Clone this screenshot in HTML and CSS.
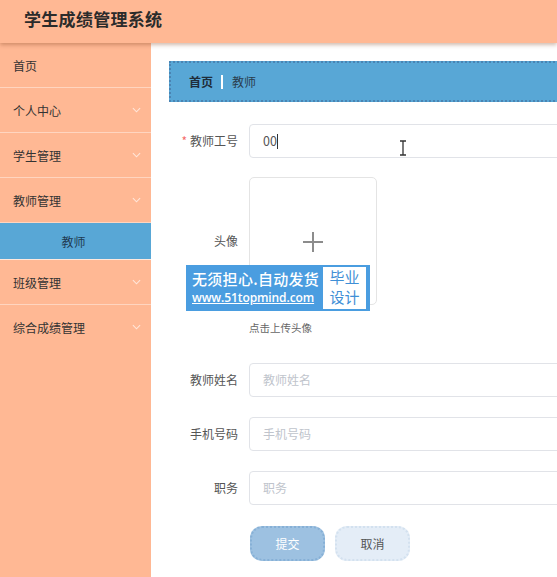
FILE: index.html
```html
<!DOCTYPE html>
<html lang="zh">
<head>
<meta charset="utf-8">
<title>学生成绩管理系统</title>
<link rel="stylesheet" href="styles.css">
</head>
<body>
<header class="topbar">
  <h1 class="title">学生成绩管理系统</h1>
</header>
<div class="layout">
  <aside class="sidebar">
    <div class="menu-item">首页</div>
    <div class="menu-item">个人中心<svg class="chev" viewBox="0 0 10 6"><path d="M1 1l4 4 4-4" /></svg></div>
    <div class="menu-item">学生管理<svg class="chev" viewBox="0 0 10 6"><path d="M1 1l4 4 4-4" /></svg></div>
    <div class="menu-item">教师管理<svg class="chev" viewBox="0 0 10 6"><path d="M1 1l4 4 4-4" /></svg></div>
    <div class="sub-item">教师</div>
    <div class="menu-item">班级管理<svg class="chev" viewBox="0 0 10 6"><path d="M1 1l4 4 4-4" /></svg></div>
    <div class="menu-item last">综合成绩管理<svg class="chev" viewBox="0 0 10 6"><path d="M1 1l4 4 4-4" /></svg></div>
  </aside>
  <main class="main">
    <div class="content">
      <div class="breadcrumb">
        <span class="crumb-strong">首页</span>
        <span class="crumb-sep"></span>
        <span class="crumb">教师</span>
      </div>
      <div class="form">
        <div class="row">
          <label class="label"><span class="req">*</span>教师工号</label>
          <div class="input filled">00<span class="caret"></span></div>
        </div>
        <div class="row row-avatar">
          <label class="label label-mid">头像</label>
          <div class="upload-col">
            <div class="upload">
              <span class="plus-h"></span>
              <span class="plus-v"></span>
            </div>
            <div class="hint">点击上传头像</div>
          </div>
        </div>
        <div class="row">
          <label class="label">教师姓名</label>
          <div class="input placeholder">教师姓名</div>
        </div>
        <div class="row">
          <label class="label">手机号码</label>
          <div class="input placeholder">手机号码</div>
        </div>
        <div class="row">
          <label class="label">职务</label>
          <div class="input placeholder">职务</div>
        </div>
        <div class="buttons">
          <button class="btn btn-primary">提交</button>
          <button class="btn btn-cancel">取消</button>
        </div>
      </div>
    </div>
  </main>
</div>
<div class="watermark">
  <div class="wm-left">
    <div class="wm-line1">无须担心.自动发货</div>
    <div class="wm-line2">www.51topmind.com</div>
  </div>
  <div class="wm-right">毕业<br>设计</div>
</div>
<svg class="ibeam" viewBox="0 0 8 16"><path d="M1 1h6M4 1v14M1 15h6" /></svg>
</body>
</html>
```
FILE: styles.css
```css
html, body {
  margin: 0;
  padding: 0;
  height: 100%;
  overflow: hidden;
  font-family: "Noto Sans CJK SC", "Noto Sans", sans-serif;
  background: #ffffff;
}

.topbar {
  height: 43px;
  background: #ffb894;
  box-shadow: 0 2px 4px rgba(120, 60, 30, 0.35);
  position: relative;
  z-index: 2;
  display: flex;
  align-items: center;
}

.title {
  margin: 0 0 0 24px;
  font-size: 17px;
  font-weight: 700;
  color: #2b2b2b;
  letter-spacing: 0.3px;
  line-height: 1;
  margin-top: -6px;
}

.layout {
  display: flex;
  height: calc(100% - 43px);
}

.sidebar {
  width: 151px;
  flex: 0 0 151px;
  background: #ffb894;
  height: 100%;
}

.menu-item {
  height: 44px;
  border-bottom: 1px solid #ffd5c0;
  display: flex;
  align-items: center;
  justify-content: space-between;
  padding: 0 10px 0 13px;
  font-size: 12px;
  color: #333333;
}

.menu-item.last {
  border-bottom-color: transparent;
}

.chev {
  width: 9px;
  height: 6px;
  fill: none;
  stroke: rgba(255, 255, 255, 0.65);
  stroke-width: 1.2;
}

.sub-item {
  height: 36px;
  background: #58a7d6;
  border-bottom: 1px solid #ffe9de;
  display: flex;
  align-items: center;
  justify-content: center;
  font-size: 12px;
  color: #1f3a52;
  padding-right: 4px;
}

.main {
  flex: 1;
  overflow: hidden;
  padding: 18px 0 0 18px;
}

.content {
  width: 430px;
}

.breadcrumb {
  height: 37px;
  background: #58a7d6;
  border: 2px dotted #4a84b3;
  display: flex;
  align-items: center;
  padding-left: 18px;
  font-size: 12px;
}

.crumb-strong {
  color: #1f2d3a;
  font-weight: 600;
}

.crumb-sep {
  display: inline-block;
  width: 2px;
  height: 14px;
  background: #ffffff;
  margin: 0 9px 0 8px;
}

.crumb {
  color: #2a3c4c;
}

.form {
  margin-top: 22px;
}

.row {
  display: flex;
  align-items: flex-start;
  margin-bottom: 20px;
}

.row:first-child {
  margin-bottom: 19px;
}

.label {
  width: 69px;
  flex: 0 0 69px;
  padding-right: 11px;
  text-align: right;
  font-size: 12px;
  line-height: 34px;
  color: #555555;
}

.req {
  color: #f56c6c;
  margin-right: 3px;
}

.input {
  flex: 1;
  height: 32px;
  border: 1px solid #e1e3e8;
  border-radius: 4px;
  padding-left: 13px;
  font-size: 12px;
  line-height: 32px;
  display: flex;
  align-items: center;
}

.filled {
  color: #555555;
  font-size: 12.5px;
}

.caret {
  display: inline-block;
  width: 1px;
  height: 15px;
  background: #333333;
}

.placeholder {
  color: #c0c4cc;
}

.row-avatar {
  align-items: stretch;
  margin-bottom: 27px;
}

.label-mid {
  height: 128px;
  line-height: 128px;
}

.upload-col {
  display: flex;
  flex-direction: column;
}

.upload {
  width: 126px;
  height: 126px;
  border: 1px solid #e4e4e4;
  border-radius: 5px;
  position: relative;
}

.plus-h, .plus-v {
  position: absolute;
  background: #8c8c8c;
}

.plus-h {
  width: 20px;
  height: 1.5px;
  left: 53px;
  top: 63px;
}

.plus-v {
  width: 1.5px;
  height: 20px;
  left: 62px;
  top: 54px;
}

.hint {
  margin-top: 15px;
  font-size: 10.5px;
  line-height: 16px;
  color: #666666;
}

.buttons {
  display: flex;
  gap: 10px;
  margin-left: 81px;
  margin-top: 21px;
}

.btn {
  width: 75px;
  height: 35px;
  border-radius: 12px;
  font-family: "Noto Sans CJK SC", "Noto Sans", sans-serif;
  font-size: 12px;
  padding: 0;
  cursor: pointer;
}

.btn-primary {
  background: #9dc1e1;
  border: 2px dotted #86b0d6;
  color: #ffffff;
}

.btn-cancel {
  background: #e4edf7;
  border: 2px dotted #d3e1ef;
  color: #555555;
}

.watermark {
  position: absolute;
  left: 186px;
  top: 265px;
  width: 184px;
  height: 46px;
  background: #4a9de0;
  display: flex;
  align-items: center;
  box-sizing: border-box;
  padding: 0 4px 0 6px;
  z-index: 5;
}

.wm-left {
  flex: 1;
  color: #ffffff;
}

.wm-line1 {
  font-size: 15px;
  line-height: 20px;
  font-weight: 500;
  letter-spacing: 0.3px;
}

.wm-line2 {
  font-family: "Open Sans", "DejaVu Sans", sans-serif;
  font-size: 12px;
  line-height: 18px;
  font-weight: 600;
  text-decoration: underline;
  letter-spacing: -0.1px;
}

.wm-right {
  width: 43px;
  height: 42px;
  background: #ffffff;
  color: #3f8fd6;
  font-size: 15px;
  line-height: 20px;
  text-align: center;
}

.ibeam {
  position: absolute;
  left: 399px;
  top: 140px;
  width: 8px;
  height: 16px;
  fill: none;
  stroke: #333333;
  stroke-width: 1.3;
  z-index: 6;
}
```
